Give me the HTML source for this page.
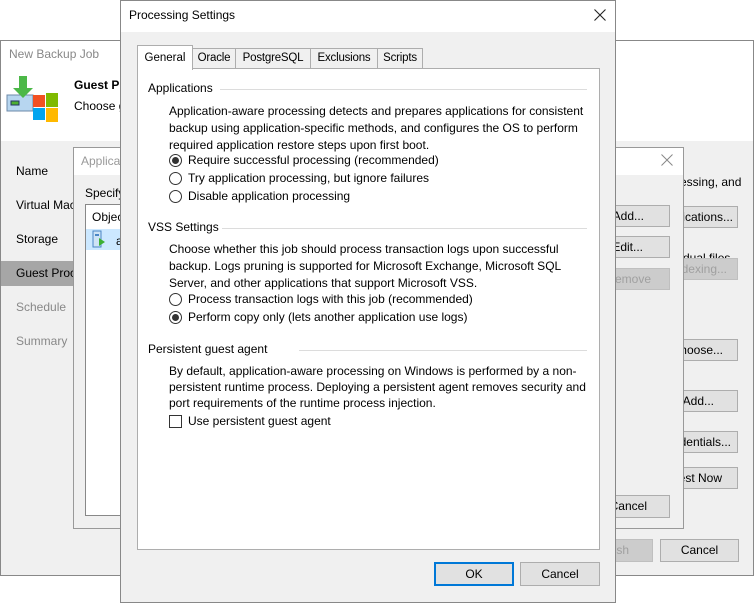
<!DOCTYPE html>
<html><head><meta charset="utf-8"><style>
*{box-sizing:border-box;margin:0;padding:0}
body{width:754px;height:603px;background:#fff;position:relative;overflow:hidden;font-family:"Liberation Sans",sans-serif;font-size:12px;color:#000}
.a{position:absolute}
.btn{position:absolute;background:#e1e1e1;border:1px solid #adadad;text-align:center;line-height:20px;font-size:12px;white-space:nowrap;overflow:hidden}
.dis{color:#a0a0a0;background:#ccc;border-color:#bfbfbf}
.t{position:absolute;white-space:nowrap}
.rad{position:absolute;width:13px;height:13px;border:1px solid #333;border-radius:50%;background:#fff}
.rad.on::after{content:"";position:absolute;left:2px;top:2px;width:7px;height:7px;border-radius:50%;background:#333}
.hr{position:absolute;height:1px;background:#dcdcdc}
.tab{position:absolute;top:48px;height:21px;border:1px solid #adadad;background:#f0f0f0;text-align:center;line-height:19px;font-size:11.5px;letter-spacing:-0.2px}
</style></head><body>
<div class="a" style="left:0;top:40px;width:754px;height:536px;border:1px solid #888;background:#f0f0f0"></div>
<div class="a" style="left:1px;top:41px;width:752px;height:100px;background:#fff"></div>
<div class="t" style="left:9px;top:47px;color:#888;font-size:12px">New Backup Job</div>
<svg class="a" style="left:6px;top:74px" width="54" height="54" viewBox="0 0 54 54">
<rect x="1" y="21" width="26" height="16" fill="#b7d6f0" stroke="#6c8aa8"/>
<rect x="5" y="27" width="8" height="4" fill="#4caf30" stroke="#236"/>
<path d="M13 2h8v12h6l-10 10-10-10h6z" fill="#4cb848"/>
<rect x="27" y="21" width="12" height="12" fill="#f25022"/><rect x="40" y="19" width="12" height="14" fill="#7fba00"/>
<rect x="27" y="34" width="12" height="12" fill="#00a4ef"/><rect x="40" y="34" width="12" height="14" fill="#ffb900"/>
</svg>
<div class="t" style="left:74px;top:78px;font-weight:bold">Guest Pr</div>
<div class="t" style="left:74px;top:99px">Choose g</div>
<div class="t" style="left:16px;top:164px">Name</div>
<div class="t" style="left:16px;top:198px">Virtual Mac</div>
<div class="t" style="left:16px;top:232px">Storage</div>
<div class="a" style="left:1px;top:261px;width:72px;height:25px;background:#a6a6a6"></div>
<div class="t" style="left:16px;top:266px">Guest Proc</div>
<div class="t" style="left:16px;top:300px;color:#888">Schedule</div>
<div class="t" style="left:16px;top:334px;color:#888">Summary</div>
<div class="t" style="left:680px;top:175px">essing, and</div>
<div class="btn" style="left:650px;top:206px;width:88px;height:22px;text-align:right;padding-right:4px">plications...</div>
<div class="t" style="left:683px;top:251px">dual files.</div>
<div class="btn dis" style="left:650px;top:258px;width:88px;height:22px;text-align:right;padding-right:10px">dexing...</div>
<div class="btn" style="left:650px;top:339px;width:88px;height:22px;text-align:right;padding-right:14px">hoose...</div>
<div class="btn" style="left:650px;top:390px;width:88px;height:22px;text-align:right;padding-right:23px">Add...</div>
<div class="btn" style="left:650px;top:431px;width:88px;height:22px;text-align:right;padding-right:6px">dentials...</div>
<div class="btn" style="left:650px;top:467px;width:88px;height:22px;text-align:right;padding-right:15px">est Now</div>
<div class="btn dis" style="left:580px;top:539px;width:73px;height:23px;text-align:right;padding-right:23px">sh</div>
<div class="btn" style="left:660px;top:539px;width:79px;height:23px">Cancel</div>
<div class="a" style="left:73px;top:147px;width:611px;height:382px;border:1px solid #999;background:#f0f0f0"></div>
<div class="a" style="left:74px;top:148px;width:609px;height:27px;background:#fff"></div>
<div class="t" style="left:81px;top:154px;color:#999">Applica</div>
<svg class="a" style="left:661px;top:154px" width="12" height="12"><path d="M0.5 0.5L11.5 11.5M11.5 0.5L0.5 11.5" stroke="#888" stroke-width="1"/></svg>
<div class="t" style="left:85px;top:186px">Specify</div>
<div class="a" style="left:85px;top:204px;width:60px;height:312px;border:1px solid #888;background:#fff"></div>
<div class="t" style="left:92px;top:210px">Objec</div>
<div class="a" style="left:86px;top:229px;width:50px;height:21px;background:#cce8ff"></div>
<svg class="a" style="left:92px;top:230px" width="14" height="19"><rect x="1" y="1" width="8" height="16" fill="#cfe3f5" stroke="#4a86c5"/><rect x="3" y="4" width="4" height="2" fill="#4a86c5"/><path d="M7 8l6 4-6 4z" fill="#3cb034"/></svg>
<div class="t" style="left:116px;top:234px">a</div>
<div class="btn" style="left:590px;top:205px;width:80px;height:22px;text-align:right;padding-right:25px">Add...</div>
<div class="btn" style="left:590px;top:236px;width:80px;height:22px;text-align:right;padding-right:26px">Edit...</div>
<div class="btn dis" style="left:590px;top:268px;width:80px;height:22px;text-align:right;padding-right:18px">emove</div>
<div class="btn" style="left:590px;top:495px;width:80px;height:23px;text-align:right;padding-right:22px">Cancel</div>
<div class="a" style="left:120px;top:0;width:496px;height:603px;border:1px solid #888;background:#f0f0f0"></div>
<div class="a" style="left:121px;top:1px;width:494px;height:31px;background:#fff"></div>
<div class="t" style="left:129px;top:8px">Processing Settings</div>
<svg class="a" style="left:594px;top:9px" width="12" height="12"><path d="M0.5 0.5L11.5 11.5M11.5 0.5L0.5 11.5" stroke="#222" stroke-width="1.1"/></svg>
<div class="a" style="left:137px;top:68px;width:463px;height:482px;border:1px solid #adadad;background:#fff"></div>
<div class="tab" style="left:192px;width:44px">Oracle</div>
<div class="tab" style="left:235px;width:76px">PostgreSQL</div>
<div class="tab" style="left:310px;width:68px">Exclusions</div>
<div class="tab" style="left:377px;width:46px">Scripts</div>
<div class="a" style="left:137px;top:45px;width:56px;height:25px;border:1px solid #adadad;border-bottom:none;background:#fff;text-align:center;line-height:24px;font-size:11.5px">General</div>
<div class="t" style="left:148px;top:81px">Applications</div><div class="hr" style="left:220px;top:89px;width:367px"></div>
<div class="t" style="left:169px;top:104px">Application-aware processing detects and prepares applications for consistent</div>
<div class="t" style="left:169px;top:121px">backup using application-specific methods, and configures the OS to perform</div>
<div class="t" style="left:169px;top:138px">required application restore steps upon first boot.</div>
<div class="rad on" style="left:169px;top:154px"></div><div class="t" style="left:188px;top:153px">Require successful processing (recommended)</div>
<div class="rad" style="left:169px;top:172px"></div><div class="t" style="left:188px;top:171px">Try application processing, but ignore failures</div>
<div class="rad" style="left:169px;top:190px"></div><div class="t" style="left:188px;top:189px">Disable application processing</div>
<div class="t" style="left:148px;top:220px">VSS Settings</div><div class="hr" style="left:222px;top:228px;width:365px"></div>
<div class="t" style="left:169px;top:242px">Choose whether this job should process transaction logs upon successful</div>
<div class="t" style="left:169px;top:259px">backup. Logs pruning is supported for Microsoft Exchange, Microsoft SQL</div>
<div class="t" style="left:169px;top:276px">Server, and other applications that support Microsoft VSS.</div>
<div class="rad" style="left:169px;top:293px"></div><div class="t" style="left:188px;top:292px">Process transaction logs with this job (recommended)</div>
<div class="rad on" style="left:169px;top:311px"></div><div class="t" style="left:188px;top:310px">Perform copy only (lets another application use logs)</div>
<div class="t" style="left:148px;top:342px">Persistent guest agent</div><div class="hr" style="left:299px;top:350px;width:288px"></div>
<div class="t" style="left:169px;top:364px">By default, application-aware processing on Windows is performed by a non-</div>
<div class="t" style="left:169px;top:380px">persistent runtime process. Deploying a persistent agent removes security and</div>
<div class="t" style="left:169px;top:396px">port requirements of the runtime process injection.</div>
<div class="a" style="left:169px;top:415px;width:13px;height:13px;border:1px solid #333;background:#fff"></div><div class="t" style="left:188px;top:414px">Use persistent guest agent</div>
<div class="btn" style="left:434px;top:562px;width:80px;height:24px;border:2px solid #0078d7;line-height:20px">OK</div>
<div class="btn" style="left:520px;top:562px;width:80px;height:24px;line-height:22px">Cancel</div>
</body></html>
